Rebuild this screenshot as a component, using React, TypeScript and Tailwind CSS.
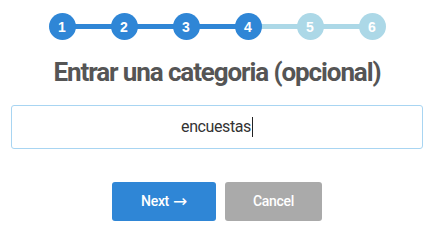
import React from "react";

const steps = [1, 2, 3, 4, 5, 6];
const active = 4;

export default function App() {
  return (
    <div className="w-[439px] h-[237px] bg-white overflow-hidden">
      <div className="ml-[11px] w-[412px] flex flex-col items-center">
        <div className="mt-[13px] flex items-center">
          {steps.map((s, i) => (
            <React.Fragment key={s}>
              {i > 0 && (
                <div
                  className={
                    "w-[37px] h-[5px] -mx-px " +
                    (s <= active ? "bg-[#2f86d6]" : "bg-[#acd8e7]")
                  }
                />
              )}
              <div
                className={
                  "relative z-10 w-[27px] h-[27px] rounded-full flex items-center justify-center text-white text-[14px] font-bold leading-none " +
                  (s <= active ? "bg-[#2f86d6]" : "bg-[#acd8e7]")
                }
                style={{ fontFamily: '"Liberation Sans", Arial, sans-serif' }}
              >
                {s}
              </div>
            </React.Fragment>
          ))}
        </div>
        <h1
          className="mt-[17px] text-[26px] font-bold leading-[30px] text-[#555555] tracking-[-1.1px]"
          style={{ fontFamily: 'Roboto, "Noto Sans", sans-serif' }}
        >
          Entrar una categoria (opcional)
        </h1>
        <div className="mt-[18px] w-[412px] h-[44px] border border-[#a8d5f2] rounded-[3px] flex items-center justify-center">
          <span
            className="text-[16px] text-[#333333] tracking-[-0.4px]"
            style={{ fontFamily: 'Roboto, "Noto Sans", sans-serif' }}
          >
            encuestas
          </span>
          <span className="w-px h-[20px] bg-[#222222] ml-px" />
        </div>
        <div
          className="mt-[33px] flex gap-[9px]"
          style={{ fontFamily: 'Roboto, "Noto Sans", sans-serif' }}
        >
          <button className="w-[104px] h-[39px] rounded-[3px] bg-[#2f86d6] text-white text-[14px] font-medium tracking-[-0.3px] flex items-center justify-center gap-[4px]">
            <span>Next</span>
            <span
              className="text-[17px] leading-none"
              style={{ fontFamily: '"DejaVu Sans", sans-serif' }}
            >
              →
            </span>
          </button>
          <button className="w-[97px] h-[39px] rounded-[3px] bg-[#aaaaaa] text-white text-[14px] font-medium tracking-[-0.3px]">
            Cancel
          </button>
        </div>
      </div>
    </div>
  );
}
